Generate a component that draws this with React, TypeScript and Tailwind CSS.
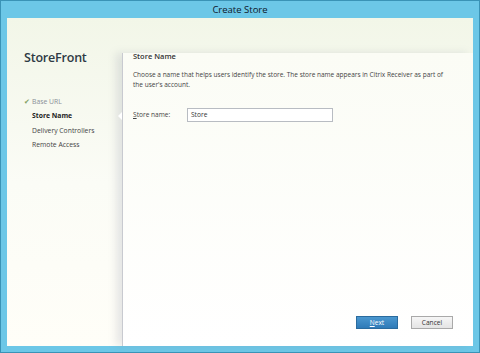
import React from "react";

export default function App() {
  return (
    <div
      className="w-[480px] h-[353px] bg-[#6cc7e7] border border-[#3a93b6] flex flex-col overflow-hidden text-slate-900"
      style={{ fontFamily: '"Open Sans", "Noto Sans", sans-serif' }}
    >
      <div className="h-[17px] flex items-center justify-center">
        <span className="text-[9.5px] font-medium text-slate-900 leading-none">Create Store</span>
      </div>
      <div className="flex-1 mx-[6px] mb-[6px] flex bg-gradient-to-b from-[#f2f6e8] via-[#fbfcf6] to-[#fffef8] relative">
        {/* left nav */}
        <div className="w-[115px] flex flex-col pl-[17px] pt-[34px]">
          <div className="text-[12.5px] font-semibold text-[#2e3a44] leading-none tracking-[-0.2px]">StoreFront</div>
          <div className="mt-[30px] flex flex-col text-[6.8px] leading-[14.6px]">
            <div className="flex items-center text-[#8a9098]">
              <span className="w-[8px] text-[#7fa060] text-[7px]">✔</span>
              <span>Base URL</span>
            </div>
            <div className="pl-[8px] font-bold text-[#222]">Store Name</div>
            <div className="pl-[8px] text-[#444]">Delivery Controllers</div>
            <div className="pl-[8px] text-[#444]">Remote Access</div>
          </div>
        </div>
        {/* right panel */}
        <div className="flex-1 relative mt-[35px] bg-gradient-to-b from-[#fbfcf5] to-white border-l border-[#c8cad0] shadow-[-6px_0_8px_rgba(120,130,150,0.18)] flex flex-col">
          <div className="absolute left-[-5px] top-[59px] w-0 h-0 border-y-[4px] border-y-transparent border-r-[4px] border-r-white" />
          <div className="pl-[10px] pr-[20px] flex flex-col flex-1">
            <div className="text-[7.5px] font-semibold text-[#333] leading-none">Store Name</div>
            <div className="mt-[9px] text-[6.5px] leading-[10px] text-[#444] w-[312px]">
              Choose a name that helps users identify the store. The store name appears in Citrix Receiver as part of the user's account.
            </div>
            <div className="mt-[18px] flex items-center">
              <span className="text-[6.6px] text-[#444] w-[54px]"><span className="underline">S</span>tore name:</span>
              <div className="w-[146px] h-[14px] border border-[#b8bcc2] bg-white flex items-center pl-[3px] text-[6.6px] text-[#333]">
                Store
              </div>
            </div>
            <div className="flex-1" />
            <div className="flex justify-end gap-[13px] mb-[17px]">
              <div className="w-[42px] h-[13px] bg-gradient-to-b from-[#4a97cf] to-[#2f7bb8] border border-[#2a6b9e] flex items-center justify-center text-[6.6px] text-white">
                <span className="underline">N</span>ext
              </div>
              <div className="w-[42px] h-[13px] bg-gradient-to-b from-[#f6f6f6] to-[#e4e4e4] border border-[#a9a9a9] flex items-center justify-center text-[6.6px] text-[#333]">
                Cancel
              </div>
            </div>
          </div>
        </div>
      </div>
    </div>
  );
}
